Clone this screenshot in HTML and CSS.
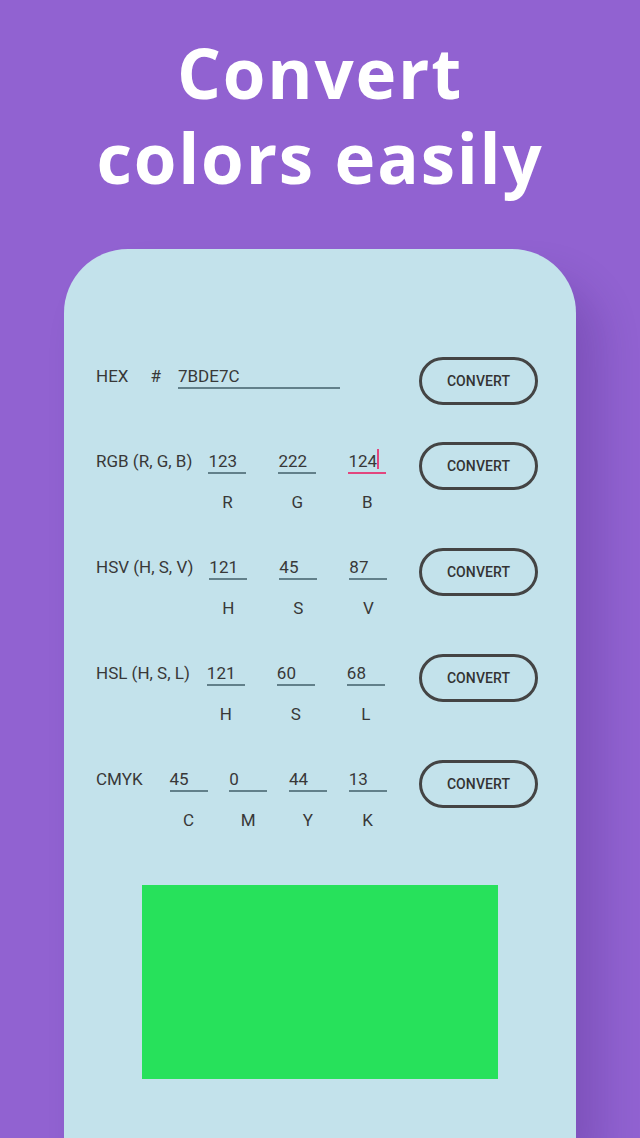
FILE: index.html
```html
<!DOCTYPE html>
<html>
<head>
<meta charset="utf-8">
<link rel="stylesheet" href="styles.css">
</head>
<body>
<div class="screen">
  <h1 class="title"><span class="tline">Convert</span><span class="tline">colors easily</span></h1>
  <div class="card">
    <div class="row row-hex">
      <span class="label">HEX</span>
      <span class="hash">#</span>
      <div class="val val-hex">7BDE7C</div>
      <button class="btn">CONVERT</button>
    </div>

    <div class="row row-3">
      <span class="label">RGB (R, G, B)</span>
      <div class="fields">
        <div class="field"><div class="val">123</div><div class="sub">R</div></div>
        <div class="field"><div class="val">222</div><div class="sub">G</div></div>
        <div class="field"><div class="val active">124<span class="cursor"></span></div><div class="sub">B</div></div>
      </div>
      <button class="btn">CONVERT</button>
    </div>

    <div class="row row-3">
      <span class="label">HSV (H, S, V)</span>
      <div class="fields">
        <div class="field"><div class="val">121</div><div class="sub">H</div></div>
        <div class="field"><div class="val">45</div><div class="sub">S</div></div>
        <div class="field"><div class="val">87</div><div class="sub">V</div></div>
      </div>
      <button class="btn">CONVERT</button>
    </div>

    <div class="row row-3 row-hsl">
      <span class="label">HSL (H, S, L)</span>
      <div class="fields">
        <div class="field"><div class="val">121</div><div class="sub">H</div></div>
        <div class="field"><div class="val">60</div><div class="sub">S</div></div>
        <div class="field"><div class="val">68</div><div class="sub">L</div></div>
      </div>
      <button class="btn">CONVERT</button>
    </div>

    <div class="row row-4">
      <span class="label">CMYK</span>
      <div class="fields">
        <div class="field"><div class="val">45</div><div class="sub">C</div></div>
        <div class="field"><div class="val">0</div><div class="sub">M</div></div>
        <div class="field"><div class="val">44</div><div class="sub">Y</div></div>
        <div class="field"><div class="val">13</div><div class="sub">K</div></div>
      </div>
      <button class="btn">CONVERT</button>
    </div>

    <div class="swatch"></div>
  </div>
</div>
</body>
</html>
```

FILE: styles.css
```css
html, body {
  margin: 0;
  padding: 0;
}
body {
  width: 640px;
  height: 1138px;
  overflow: hidden;
  background: #9162d1;
  font-family: Roboto, "Liberation Sans", sans-serif;
}
.screen {
  width: 640px;
  height: 1138px;
  display: flex;
  flex-direction: column;
}
.title {
  margin: 0;
  height: 249px;
  flex: none;
  box-sizing: border-box;
  padding-top: 30px;
  text-align: center;
  color: #ffffff;
  font-family: "Open Sans", sans-serif;
  font-weight: 700;
  font-size: 69px;
  letter-spacing: 1.8px;
  white-space: nowrap;
}
.tline {
  display: block;
  height: 85px;
  line-height: 85px;
}
.card {
  margin-left: 64px;
  width: 512px;
  flex: 1;
  box-sizing: border-box;
  background: #c3e2eb;
  border-radius: 64px 64px 0 0;
  padding: 108px 38px 0 32px;
  box-shadow: 24px 30px 40px rgba(40, 10, 90, 0.18);
  display: flex;
  flex-direction: column;
  color: #333;
}
.row {
  display: flex;
  align-items: flex-start;
  margin-bottom: 36px;
}
.row-hex {
  margin-bottom: 37px;
}
.label {
  margin-top: 9px;
  font-size: 17px;
  line-height: 20px;
  color: #383838;
  white-space: nowrap;
}
.hash {
  margin-top: 9px;
  margin-left: 22px;
  font-size: 17px;
  line-height: 20px;
  color: #383838;
}
.val {
  margin-top: 9px;
  height: 20px;
  line-height: 20px;
  font-size: 17px;
  padding-bottom: 1px;
  border-bottom: 2px solid #62808a;
  color: #383838;
  position: relative;
}
.val-hex {
  margin-left: 17px;
  width: 162px;
}
.fields {
  display: flex;
  gap: 32px;
  margin-left: 16px;
}
.row-hsl .fields {
  margin-left: 17px;
}
.row-4 .label {
  margin-right: 11px;
}
.row-4 .fields {
  gap: 21.7px;
}
.field {
  width: 38px;
  display: flex;
  flex-direction: column;
}
.sub {
  margin-top: 18px;
  text-align: center;
  font-size: 17px;
  line-height: 20px;
  color: #383838;
}
.val.active {
  border-bottom-color: #e2467e;
}
.cursor {
  display: inline-block;
  width: 2px;
  height: 20px;
  background: #e2467e;
  vertical-align: top;
  margin-top: -2px;
}
.btn {
  margin-left: auto;
  width: 119px;
  height: 48px;
  box-sizing: border-box;
  border: 3px solid #444;
  border-radius: 24px;
  background: transparent;
  font-family: Roboto, "Liberation Sans", sans-serif;
  font-weight: 500;
  font-size: 14px;
  color: #333;
  padding: 0;
  letter-spacing: 0.1px;
}
.swatch {
  align-self: center;
  margin-top: 19px;
  margin-left: 6px;
  width: 356px;
  height: 194px;
  background: #27e15b;
}
```
